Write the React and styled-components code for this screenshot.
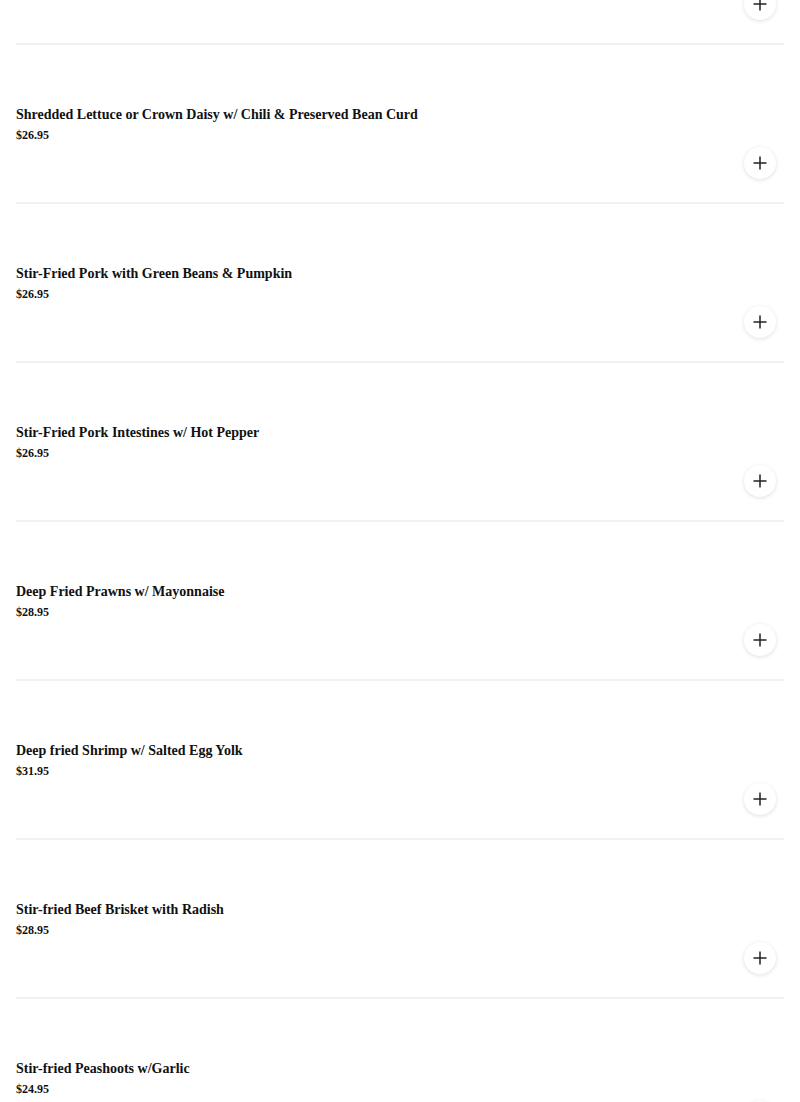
import React from "react";
import styled, { createGlobalStyle } from "styled-components";

const Global = createGlobalStyle`
  html, body { margin: 0; padding: 0; background: #fff; }
  body { font-family: "Liberation Serif", "Times New Roman", serif; color: #111; overflow: hidden; }
`;

const List = styled.main`
  display: flex;
  flex-direction: column;
  padding: 0 16px;
  margin-top: -114px;
`;

const Item = styled.section`
  display: flex;
  flex-direction: column;
  padding: 62px 8px 23px 0;
  border-bottom: 2px solid #f1f1f1;
`;

const Title = styled.h3`
  margin: 0;
  font-size: 14px;
  line-height: 16px;
  font-weight: 700;
`;

const Price = styled.div`
  margin-top: 5px;
  font-size: 12px;
  line-height: 14px;
  font-weight: 700;
`;

const Actions = styled.div`
  display: flex;
  justify-content: flex-end;
  margin-top: 5px;
`;

const AddButton = styled.button`
  width: 32px;
  height: 32px;
  border-radius: 50%;
  border: none;
  background: #fff;
  box-shadow: 0 1px 4px rgba(0, 0, 0, 0.13);
  display: flex;
  align-items: center;
  justify-content: center;
  padding: 0;
  color: #222;
  cursor: pointer;
`;

const Plus = () => (
  <svg width="16" height="16" viewBox="0 0 16 16" fill="none" stroke="currentColor" strokeWidth="1.5">
    <path d="M8 1.5v13M1.5 8h13" />
  </svg>
);

const items = [
  { name: "Stir-Fried Tofu w/ Minced Pork", price: "$24.95" },
  { name: "Shredded Lettuce or Crown Daisy w/ Chili & Preserved Bean Curd", price: "$26.95" },
  { name: "Stir-Fried Pork with Green Beans & Pumpkin", price: "$26.95" },
  { name: "Stir-Fried Pork Intestines w/ Hot Pepper", price: "$26.95" },
  { name: "Deep Fried Prawns w/ Mayonnaise", price: "$28.95" },
  { name: "Deep fried Shrimp w/ Salted Egg Yolk", price: "$31.95" },
  { name: "Stir-fried Beef Brisket with Radish", price: "$28.95" },
  { name: "Stir-fried Peashoots w/Garlic", price: "$24.95" },
];

export default function App() {
  return (
    <>
      <Global />
      <List>
        {items.map((it) => (
          <Item key={it.name}>
            <Title>{it.name}</Title>
            <Price>{it.price}</Price>
            <Actions>
              <AddButton aria-label="Add">
                <Plus />
              </AddButton>
            </Actions>
          </Item>
        ))}
      </List>
    </>
  );
}
